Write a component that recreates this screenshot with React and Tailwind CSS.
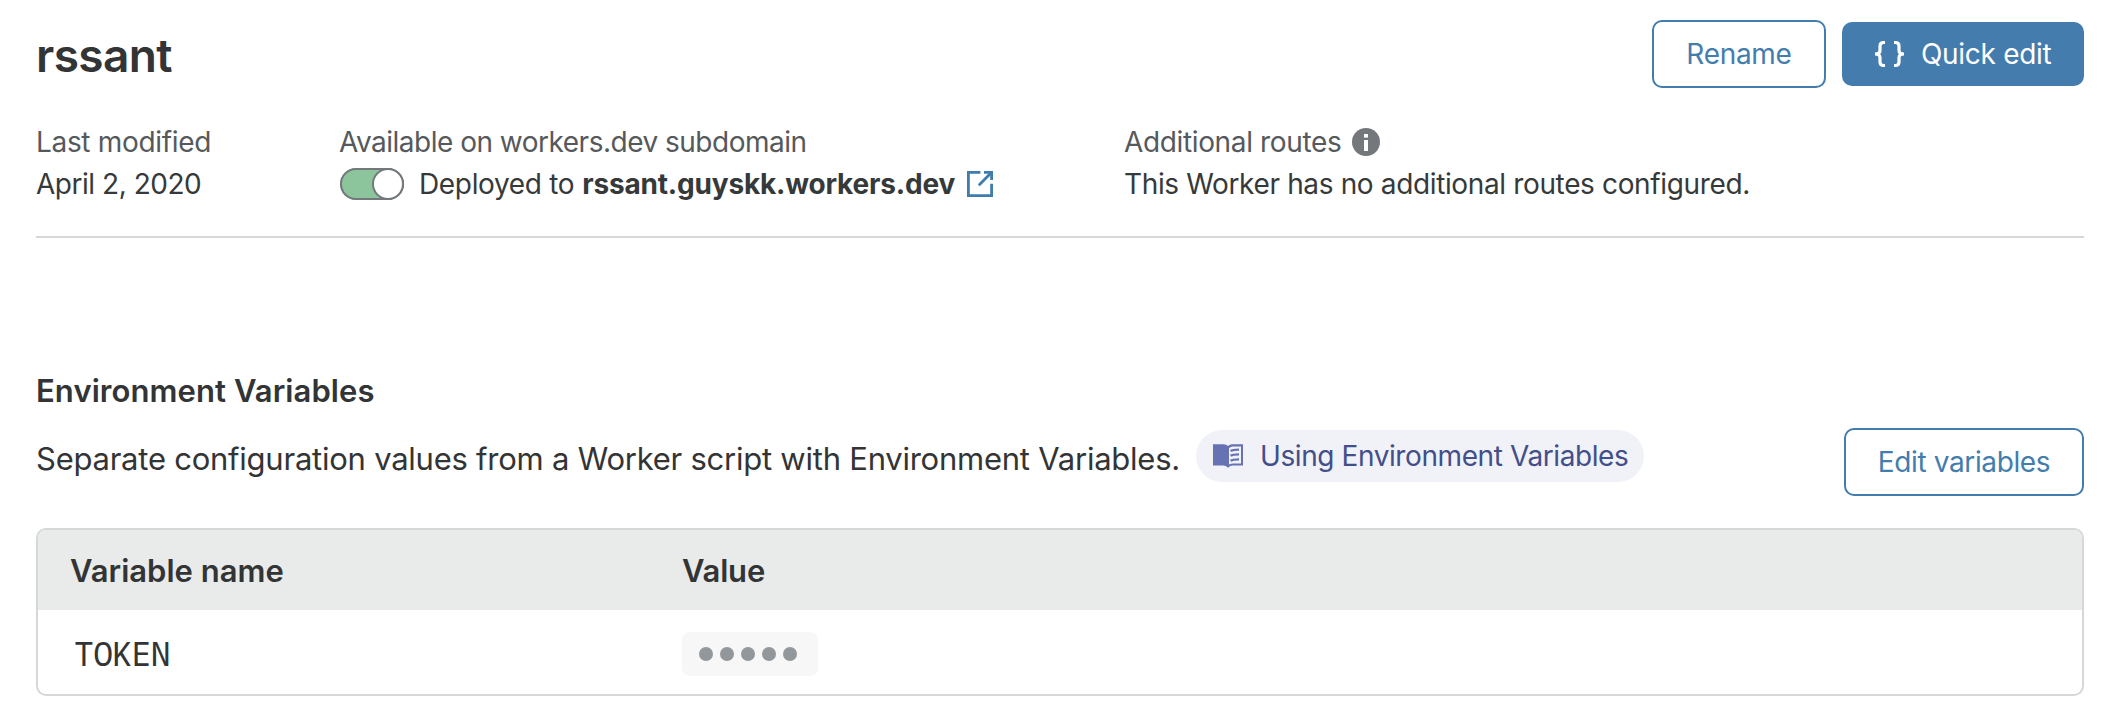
function BracesIcon() {
  return (
    <svg width="31" height="28" viewBox="0 0 31 28" fill="none" stroke="currentColor" strokeWidth="3.2">
      <path d="M11 2.5H9.6Q6 2.5 6 6V10.2Q6 14 1 14Q6 14 6 17.8V22Q6 25.5 9.6 25.5H11" />
      <path d="M20 2.5H21.4Q25 2.5 25 6V10.2Q25 14 30 14Q25 14 25 17.8V22Q25 25.5 21.4 25.5H20" />
    </svg>
  );
}

function ExternalIcon() {
  return (
    <svg width="26" height="26" viewBox="0 0 26 26" fill="none" stroke="#3f7cae" strokeWidth="2.8">
      <path d="M13.4 1.4H1.4V24.6H24.6V12.8" />
      <path d="M12.6 13.4L24.2 1.8" strokeWidth="2.8" strokeLinecap="round" />
      <path d="M17 1.4H24.6V9" />
    </svg>
  );
}

function InfoIcon() {
  return (
    <svg width="28" height="28" viewBox="0 0 28 28">
      <circle cx="14" cy="14" r="14" fill="#74777b" />
      <rect x="12" y="6" width="4" height="3.6" fill="#fff" />
      <rect x="12" y="12" width="4" height="11" fill="#fff" />
    </svg>
  );
}

function BookIcon() {
  return (
    <svg width="30" height="24" viewBox="0 0 30 24">
      <path d="M0 0.3H10.5Q13.5 0.3 15 2Q16.5 0.3 19.5 0.3H30V21.6H20Q17 21.6 15 23.8Q13 21.6 10 21.6H0Z" fill="#6672b2" />
      <path d="M16 4.2Q17.4 2.6 20 2.6H28V19.4H20.5Q17.8 19.4 16 20.4Z" fill="#f1f2f8" />
      <path d="M17.6 7Q19.4 5.6 26 5.6M17.6 11.8Q19.4 10.4 26 10.4M17.6 16.8Q19.4 15.4 26 15.4" fill="none" stroke="#6672b2" strokeWidth="2.4" />
    </svg>
  );
}

function Toggle() {
  return (
    <span className="flex h-8 w-16 shrink-0 justify-end rounded-full bg-[#8cc49c] shadow-[inset_0_0_0_2px_#74777b]">
      <span className="size-8 rounded-full border-2 border-[#74777b] bg-white" />
    </span>
  );
}

export default function App() {
  return (
    <main className="h-[726px] w-[2110px] bg-white pt-5 pr-[26px] pl-9 font-['Inter',sans-serif] text-[28px] leading-[42px] whitespace-nowrap text-[#36393a]">
      <header className="flex h-[68px] items-center justify-between">
        <h1 className="pt-[2px] text-[46px] leading-[56px] font-semibold tracking-[-0.6px] text-[#333435]">rssant</h1>
        <div className="flex items-center gap-4 tracking-[-0.3px]">
          <button className="h-[68px] w-[174px] rounded-[10px] border-2 border-[#437dae] text-[#437dae]">Rename</button>
          <button className="flex h-16 w-[242px] items-center rounded-[10px] bg-[#437cad] pl-8 text-white">
            <BracesIcon />
            <span className="ml-4">Quick edit</span>
          </button>
        </div>
      </header>

      <section className="mt-[33px] flex h-[117px] border-b-2 border-[#d5d7d8]">
        <div className="w-[303px]">
          <div className="tracking-[-0.32px] text-[#56595c]">Last modified</div>
          <div className="tracking-[-0.47px]">April 2, 2020</div>
        </div>
        <div className="w-[785px]">
          <div className="tracking-[-0.5px] text-[#56595c]">Available on workers.dev subdomain</div>
          <div className="flex items-center pl-px">
            <Toggle />
            <span className="ml-[15px] tracking-[-0.34px]">Deployed to</span>
            <span className="mr-3 ml-2 font-bold tracking-[-0.18px]">rssant.guyskk.workers.dev</span>
            <ExternalIcon />
          </div>
        </div>
        <div>
          <div className="flex items-center gap-[11px] tracking-[-0.36px] text-[#56595c]">
            Additional routes
            <InfoIcon />
          </div>
          <div className="tracking-[-0.36px]">This Worker has no additional routes configured.</div>
        </div>
      </section>

      <section className="mt-[133px] text-[31px] text-[#333435]">
        <h2 className="leading-10 font-semibold tracking-[0.08px]">Environment Variables</h2>
        <div className="mt-[17px] flex items-start">
          <p className="w-[1160px] leading-[62px] tracking-[-0.24px]">
            Separate configuration values from a Worker script with Environment Variables.
          </p>
          <a className="mt-[2px] flex h-[52px] w-[448px] items-center rounded-full bg-[#f1f2f8] pl-[17px] text-[28px] tracking-[-0.41px] text-[#434f8a]">
            <BookIcon />
            <span className="ml-[17px]">Using Environment Variables</span>
          </a>
          <button className="ml-auto h-[68px] w-60 rounded-[10px] border-2 border-[#437dae] text-[28px] tracking-[-0.37px] text-[#437dae]">
            Edit variables
          </button>
        </div>

        <div className="mt-8 h-[168px] overflow-hidden rounded-[10px] border-2 border-[#d5d7d8]">
          <div className="flex h-20 items-center bg-[#e9ebea] pt-[2px] pl-8 font-semibold">
            <div className="w-[612px]">Variable name</div>
            <div className="tracking-[-0.2px]">Value</div>
          </div>
          <div className="flex h-[84px] items-center pt-[3px] pl-9">
            <div className="w-[608px] font-['Noto_Sans_Mono',monospace] text-[33px] tracking-[-0.6px]">TOKEN</div>
            <div className="flex h-11 w-[136px] items-center gap-[7px] rounded-lg bg-[#f7f7f8] pl-[17px]">
              <span className="size-[14px] rounded-full bg-[#92979b]" />
              <span className="size-[14px] rounded-full bg-[#92979b]" />
              <span className="size-[14px] rounded-full bg-[#92979b]" />
              <span className="size-[14px] rounded-full bg-[#92979b]" />
              <span className="size-[14px] rounded-full bg-[#92979b]" />
            </div>
          </div>
        </div>
      </section>
    </main>
  );
}
